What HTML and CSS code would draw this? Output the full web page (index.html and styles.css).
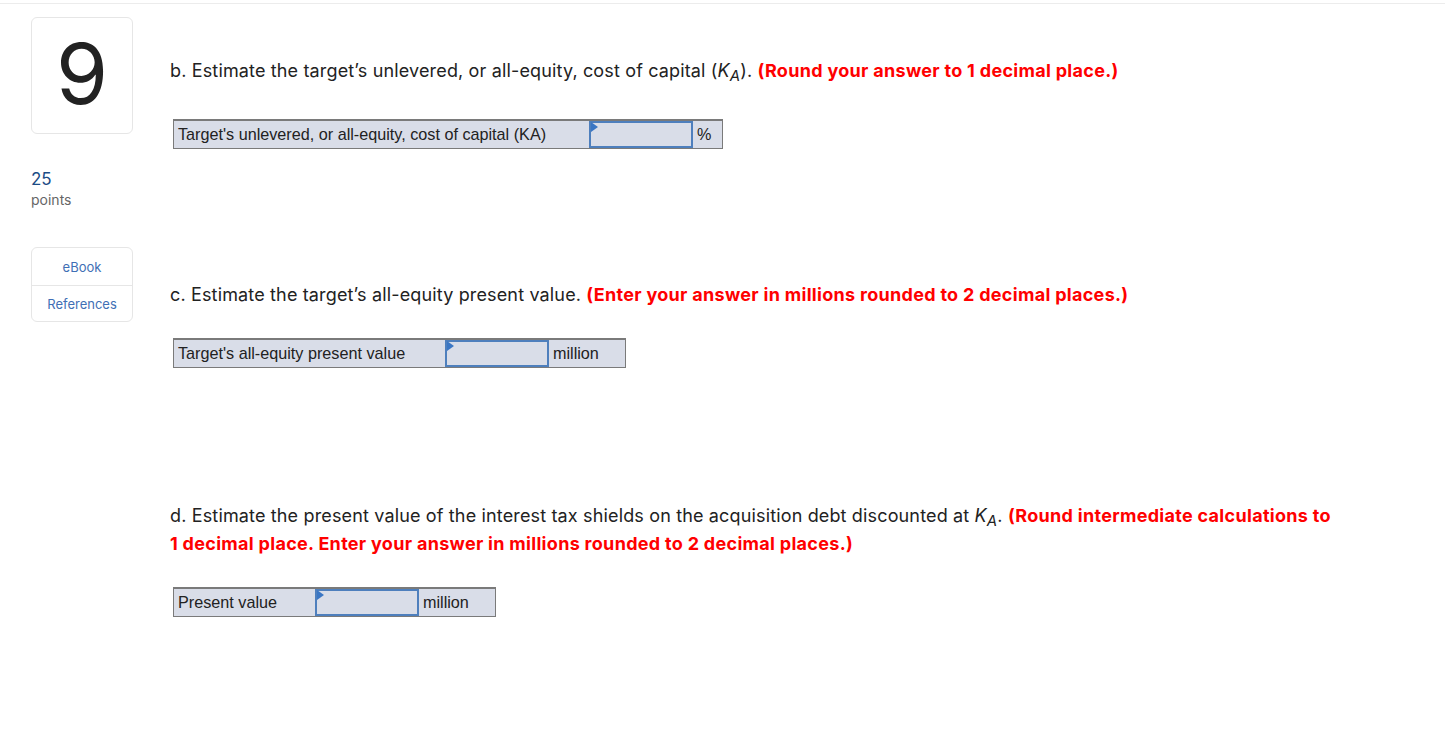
FILE: index.html
```html
<!DOCTYPE html>
<html>
<head>
<meta charset="utf-8">
<link rel="stylesheet" href="styles.css">
</head>
<body>
<div class="page">
  <aside class="side">
    <div class="qnum">9</div>
    <div class="points"><div class="pts-num">25</div><div class="pts-lbl">points</div></div>
    <div class="links">
      <div class="link">eBook</div>
      <div class="link">References</div>
    </div>
  </aside>
  <main class="main">
    <section class="part part-b">
      <p class="q">b. Estimate the target’s unlevered, or all-equity, cost of capital (<span class="k">K<sub>A</sub></span>). <span class="red">(Round your answer to 1 decimal place.)</span></p>
      <div class="tbl">
        <div class="cell lbl w-b">Target's unlevered, or all-equity, cost of capital (KA)</div>
        <div class="cell inp"><span class="flag"></span></div>
        <div class="cell unit w-pct">%</div>
      </div>
    </section>
    <section class="part part-c">
      <p class="q">c. Estimate the target’s all-equity present value. <span class="red">(Enter your answer in millions rounded to 2 decimal places.)</span></p>
      <div class="tbl">
        <div class="cell lbl w-c">Target's all-equity present value</div>
        <div class="cell inp"><span class="flag"></span></div>
        <div class="cell unit w-mil">million</div>
      </div>
    </section>
    <section class="part part-d">
      <p class="q">d. Estimate the present value of the interest tax shields on the acquisition debt discounted at <span class="k">K<sub>A</sub></span>. <span class="red">(Round intermediate calculations to 1 decimal place. Enter your answer in millions rounded to 2 decimal places.)</span></p>
      <div class="tbl">
        <div class="cell lbl w-d">Present value</div>
        <div class="cell inp"><span class="flag"></span></div>
        <div class="cell unit w-mil">million</div>
      </div>
    </section>
  </main>
</div>
</body>
</html>
```
FILE: styles.css
```css
html, body { margin: 0; padding: 0; background: #fff; }
body { font-family: Inter, "Open Sans", sans-serif; color: #222; }
.page {
  display: flex;
  border-top: 1px solid #ececec;
  margin-top: 3px;
  min-height: 749px;
}
.side {
  width: 102px;
  margin-left: 31px;
  padding-top: 13px;
  flex: none;
}
.qnum {
  box-sizing: border-box;
  height: 117px;
  border: 1px solid #e6e6e6;
  border-radius: 6px;
  display: flex;
  align-items: center;
  justify-content: center;
  font-size: 84px;
  font-weight: 400;
  color: #222;
  line-height: 1;
  padding-bottom: 4px;
}
.points { margin-top: 35px; }
.pts-num { font-size: 17px; color: #1b4c85; line-height: 20px; }
.pts-lbl { font-size: 14px; color: #666; line-height: 22px; }
.links {
  margin-top: 36px;
  border: 1px solid #e6e6e6;
  border-radius: 6px;
}
.link {
  height: 37px;
  display: flex;
  align-items: center;
  justify-content: center;
  font-size: 13px;
  color: #3f6fb5;
}
.link + .link { border-top: 1px solid #e6e6e6; height: 35px; }
.main { flex: 1; padding-left: 37px; padding-right: 108px; }
.q {
  margin: 0;
  font-size: 18px;
  line-height: 28px;
  color: #222;
  letter-spacing: 0.15px;
}
.red { color: #ff0000; font-weight: 700; letter-spacing: 0.3px; }
.k { font-style: italic; }
.k sub { font-size: 15px; vertical-align: -4px; line-height: 0; }
.part-b { padding-top: 53px; }
.part-b .tbl { margin-top: 34px; }
.part-c { padding-top: 132px; }
.part-c .tbl { margin-top: 29px; }
.part-d { padding-top: 134px; }
.part-d .tbl { margin-top: 29px; }
.tbl {
  display: flex;
  margin-left: 3px;
  height: 30px;
  box-sizing: border-box;
  border-top: 2px solid #7a7a7a;
  border-left: 1px solid #7a7a7a;
  border-bottom: 1px solid #7a7a7a;
  border-right: 1px solid #7a7a7a;
  background: #d9dde8;
  width: max-content;
}
.cell {
  font-family: "Liberation Sans", Arial, sans-serif;
  font-size: 16.2px;
  color: #222;
  display: flex;
  align-items: center;
  padding-left: 4px;
  box-sizing: border-box;
}
.inp {
  position: relative;
  width: 104px;
  border: 2px solid #4e7fbd;
  padding: 0;
}
.flag {
  position: absolute;
  left: 0;
  top: -1px;
  width: 0; height: 0;
  border-top: 5px solid transparent;
  border-bottom: 5px solid transparent;
  border-left: 7px solid #3a76c4;
}
.w-b { width: 415px; }
.w-c { width: 271px; }
.w-d { width: 141px; }
.w-pct { width: 29px; }
.w-mil { width: 76px; }
```
